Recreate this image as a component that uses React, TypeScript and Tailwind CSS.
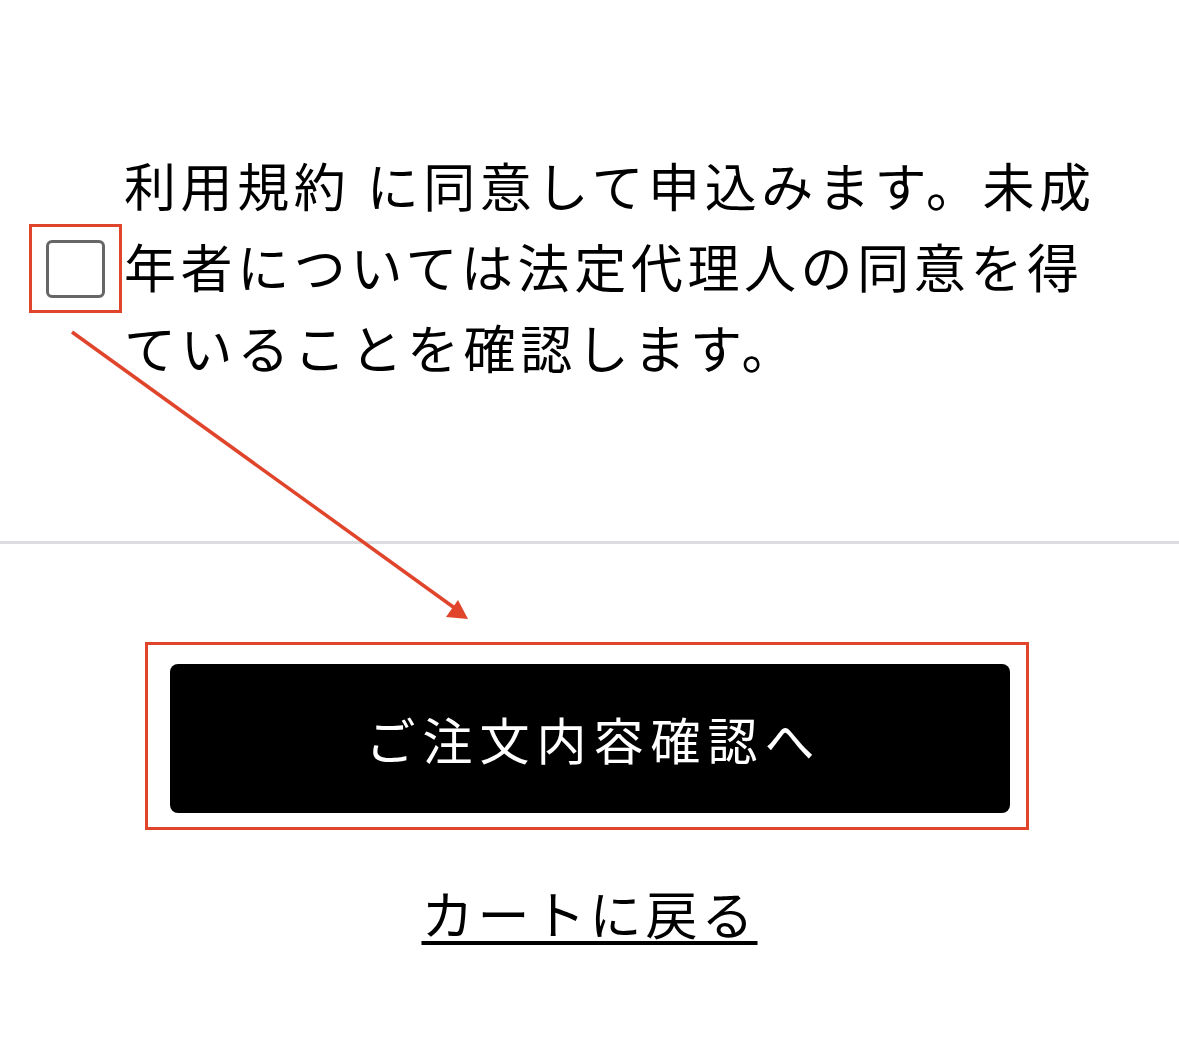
import { useState } from 'react';

const RED = '#e0452b';

function Arrow() {
  return (
    <svg
      className="pointer-events-none absolute left-0 top-0"
      width={1179}
      height={1049}
      viewBox="0 0 1179 1049"
    >
      <line x1={72} y1={332} x2={456} y2={609} stroke={RED} strokeWidth={3.5} />
      <polygon points="468,619 446,617 458,600" fill={RED} />
    </svg>
  );
}

export default function App() {
  const [agreed, setAgreed] = useState(false);

  return (
    <div
      className="relative h-[1049px] w-[1179px] overflow-hidden bg-white text-black"
      style={{ fontFamily: '"Noto Sans CJK JP", "Noto Sans", sans-serif' }}
    >
      <div className="flex items-center pl-[29px] pt-[144px] pb-[154px]">
        <div className="mt-[6px] flex h-[89px] w-[93px] shrink-0 items-center justify-center border-[3px] border-[#e0452b]">
          <button
            type="button"
            onClick={() => setAgreed(!agreed)}
            className="h-[58px] w-[59px] rounded-[6px] border-[3px] border-[#666666] bg-white"
            aria-pressed={agreed}
          />
        </div>
        <p className="ml-[2px] w-[1000px] text-[52px] font-normal leading-[81px] tracking-[4.6px]">
          利用規約 に同意して申込みます。未成年者については法定代理人の同意を得ていることを確認します。
        </p>
      </div>

      <div className="h-[3px] w-full bg-[#dcdce1]" />

      <div className="ml-[145px] mt-[98px] h-[188px] w-[884px] border-[3px] border-[#e0452b] pl-[22px] pt-[19px]">
        <button
          type="button"
          className="flex h-[149px] w-[840px] items-center justify-center rounded-[8px] bg-black pl-[7px] text-[50px] font-normal tracking-[7px] text-white"
        >
          ご注文内容確認へ
        </button>
      </div>

      <div className="mt-[53px] text-center">
        <a
          href="#"
          className="text-[52px] font-normal leading-[60px] tracking-[4px] text-black underline decoration-[4px] underline-offset-[6px]"
        >
          カートに戻る
        </a>
      </div>

      <Arrow />
    </div>
  );
}
